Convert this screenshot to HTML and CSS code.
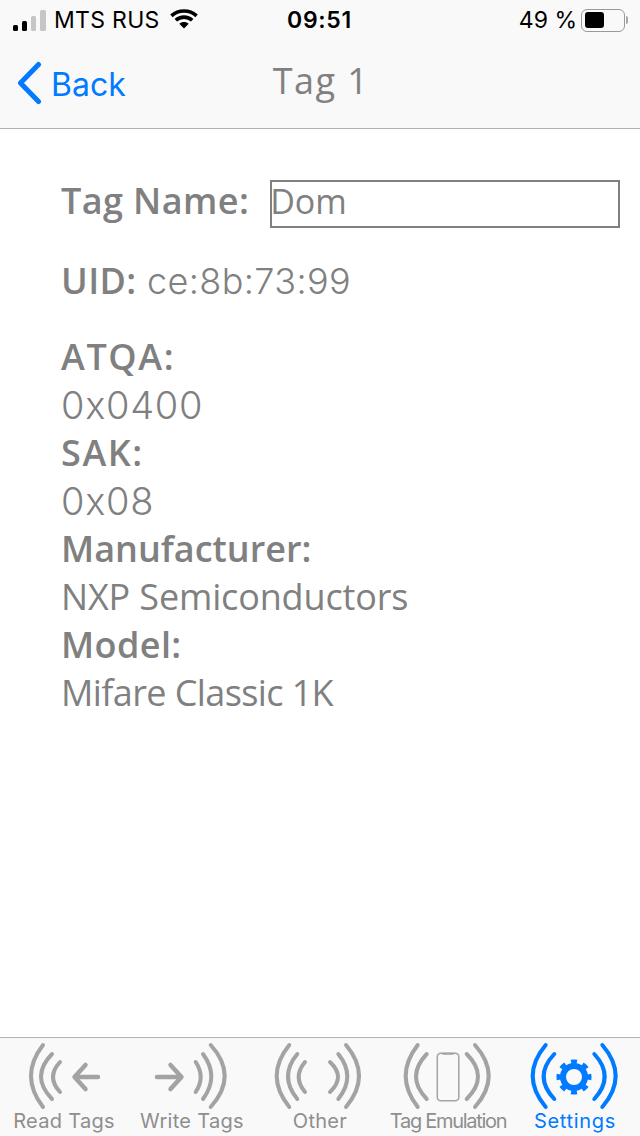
FILE: index.html
```html
<!DOCTYPE html>
<html lang="en">
<head>
<meta charset="utf-8">
<title>Tag 1</title>
<link rel="stylesheet" href="styles.css">
</head>
<body>
<div class="app">
  <header class="top">
    <div class="status">
      <div class="status-left">
        <div class="bars"><i class="bar b1"></i><i class="bar b2"></i><i class="bar b3"></i><i class="bar b4"></i></div>
        <span class="carrier">MTS RUS</span>
        <svg class="wifi" viewBox="0 0 30 20" width="30" height="20"><path d="M15 19.500 10.300 14.800C13 12.300 17 12.300 19.700 14.800Z" fill="#000"/><path d="M6.800 11.300C11.400 7 18.600 7 23.200 11.300" class="wifi-arc"/><path d="M2.400 6.900C9.400 .3 20.600 .3 27.600 6.900" class="wifi-arc"/></svg>
      </div>
      <span class="time">09:51</span>
      <div class="status-right">
        <span class="percent">49 %</span>
        <div class="battery"><div class="battery-fill"></div></div>
        <div class="battery-nub"></div>
      </div>
    </div>
    <nav class="nav">
      <div class="back">
        <svg class="chevron" viewBox="0 0 26 44" width="26" height="44"><path d="M22.500 3.500 4.500 22 22.500 40.500" fill="none" stroke="#007aff" stroke-width="5" stroke-linecap="round" stroke-linejoin="round"/></svg>
        <span class="back-label">Back</span>
      </div>
      <h1 class="title">Tag 1</h1>
    </nav>
  </header>

  <main class="content">
    <div class="name-row">
      <label class="key wide" for="tagname">Tag Name:</label>
      <input class="name-input" id="tagname" value="Dom">
    </div>
    <p class="uid"><b class="key wide">UID:</b> <span class="num uid-value">ce:8b:73:99</span></p>
    <dl class="details">
      <dt class="key caps">ATQA:</dt><dd class="num">0x0400</dd>
      <dt class="key caps">SAK:</dt><dd class="num">0x08</dd>
      <dt class="key">Manufacturer:</dt><dd class="maker">NXP Semiconductors</dd>
      <dt class="key wide">Model:</dt><dd class="model">Mifare Classic 1K</dd>
    </dl>
  </main>

  <footer class="tabs">
    <div class="tab">
      <svg class="tab-icon" viewBox="0 0 128 70"><path d="M43 4Q19 35 43 66M52 13Q30 35.500 52 58M60 21Q46 36 60 51"/><path d="M98 36H76M85.500 24 74.500 36 85.500 48" class="arrow"/></svg>
      <span class="tab-label">Read Tags</span>
    </div>
    <div class="tab">
      <svg class="tab-icon" viewBox="0 0 128 70"><path d="M82.700 4Q110.700 35 82.700 66M75 13Q91.600 35.500 75 58M67.700 21Q77.700 36 67.700 51"/><path d="M29 36H52M42.500 24 53.500 36 42.500 48" class="arrow"/></svg>
      <span class="tab-label">Write Tags</span>
    </div>
    <div class="tab">
      <svg class="tab-icon" viewBox="0 0 128 70"><path d="M33.300 4Q8.100 35 33.300 66M41.300 13Q22.700 35.500 41.300 58M49 21Q36.400 36 49 51M90 4Q116 35 90 66M82.300 13Q100.300 35.500 82.300 58M74 21Q90 36 74 51"/></svg>
      <span class="tab-label">Other</span>
    </div>
    <div class="tab">
      <svg class="tab-icon" viewBox="0 0 128 70"><path d="M33.700 4Q9.700 35 33.700 66M42.700 13Q21.300 35.500 42.700 58M91 4Q118.400 35 91 66M82.700 13Q105.300 35.500 82.700 58"/><rect class="phone" x="53.300" y="12.300" width="21.500" height="47.500" rx="3.500"/><path class="notch" d="M59 12.800H69"/></svg>
      <span class="tab-label tight">Tag Emulation</span>
    </div>
    <div class="tab active">
      <svg class="tab-icon" viewBox="0 0 128 70"><path d="M33.700 4Q7.700 35 33.700 66M42.300 13Q21 35.500 42.300 58M90.300 4Q117 35 90.300 66M82.300 13Q103 35.500 82.300 58"/><circle class="gear-ring" cx="62" cy="36" r="11"/><circle class="gear-teeth" cx="62" cy="36" r="15" pathLength="48" stroke-dasharray="3 3" stroke-dashoffset="1.500"/></svg>
      <span class="tab-label">Settings</span>
    </div>
  </footer>
</div>
</body>
</html>
```
FILE: styles.css
```css
* { box-sizing: border-box; }
html, body { margin: 0; padding: 0; background: #fff; }
.app {
  width: 640px;
  height: 1136px;
  display: flex;
  flex-direction: column;
  overflow: hidden;
  font-family: "Open Sans", sans-serif;
  color: #808080;
}

/* header */
.top { background: #f9f9f9; border-bottom: 1px solid #b2b2b2; height: 129px; }
.status {
  height: 40px;
  padding: 0 12px 0 13px;
  display: grid;
  grid-template-columns: 1fr auto 1fr;
  align-items: center;
  color: #000;
  font-family: Inter, "Liberation Sans", sans-serif;
  font-size: 23px;
}
.status-left { display: flex; align-items: center; }
.bars { display: flex; align-items: flex-end; gap: 4px; height: 21px; }
.bar { display: block; width: 5px; border-radius: 1.500px; background: #000; }
.b1 { height: 6px; }
.b2 { height: 10px; }
.b3 { height: 15px; background: #c6c6c6; }
.b4 { height: 21px; background: #c6c6c6; width: 6px; }
.carrier { margin-left: 8px; letter-spacing: 0.300px; }
.wifi { margin-left: 9px; margin-bottom: 2px; }
.wifi-arc { fill: none; stroke: #000; stroke-width: 3.600; }
.time { font-weight: 600; letter-spacing: 0.700px; margin-left: -2px; }
.status-right { display: flex; align-items: center; justify-content: flex-end; }
.percent { margin-right: 4px; }
.battery {
  width: 44px;
  height: 23px;
  border: 1.500px solid #9a9a9a;
  border-radius: 6px;
  padding: 2.500px;
}
.battery-fill { width: 19px; height: 100%; background: #000; border-radius: 3px; }
.battery-nub { width: 2px; height: 8px; margin-left: 1px; background: #a8a8a8; border-radius: 0 2px 2px 0; }

.nav { height: 88px; display: grid; grid-template-columns: 1fr auto 1fr; align-items: center; }
.back { display: flex; align-items: center; padding-left: 16px; grid-column: 1; grid-row: 1; }
.chevron { margin-bottom: 2px; }
.back-label {
  margin-left: 9px;
  color: #007aff;
  font-family: Inter, "Liberation Sans", sans-serif;
  font-size: 32px;
}
.title { margin: 0 0 8px 2px; font-size: 36px; font-weight: 400; letter-spacing: 1.400px; color: #808080; grid-column: 2; }

/* content */
.content { flex: 1; padding: 48px 20px 0 61px; font-size: 36px; line-height: 48px; }
.key { font-weight: 600; }
.key.wide { letter-spacing: 0.400px; }
.key.caps { letter-spacing: 1.600px; }
.name-row { display: flex; align-items: center; gap: 21px; height: 48px; }
.name-input {
  flex: 1;
  min-width: 0;
  height: 48px;
  margin-top: 6px;
  padding: 0 0 6px;
  border: 2px solid #808080;
  border-radius: 0;
  background: #fff;
  color: #808080;
  font: inherit;
  font-size: 34px;
  line-height: 38px;
  text-indent: -2px;
  outline: none;
}
.uid { margin: 32px 0 0; }
.details { margin: 28px 0 0; }
.details dd { margin: 0; }
.num { font-family: Inter, "Open Sans", sans-serif; font-size: 38px; font-weight: 300; letter-spacing: 0.700px; }
.uid-value { font-size: 36px; letter-spacing: 0.400px; margin-left: 1px; }
.maker { letter-spacing: -0.150px; }
.model { letter-spacing: -0.600px; }

/* tab bar */
.tabs {
  height: 99px;
  background: #f9f9f9;
  border-top: 1px solid #b2b2b2;
  display: grid;
  grid-template-columns: repeat(5, 128px);
}
.tab { display: flex; flex-direction: column; align-items: center; color: #8e8e8e; }
.tab-icon {
  display: block;
  width: 128px;
  height: 70px;
  margin-top: 3px;
  fill: none;
  stroke: #a3a3a3;
  stroke-width: 4;
  stroke-linecap: round;
  stroke-linejoin: round;
}
.tab-icon .arrow { stroke-width: 4.500; }
.tab-icon .phone { stroke-width: 1.500; }
.tab-icon .notch { stroke-width: 2; }
.tab-label {
  margin-top: -2px;
  font-family: Inter, "Liberation Sans", sans-serif;
  font-size: 20px;
  line-height: 24px;
  letter-spacing: 0.300px;
  white-space: nowrap;
}
.tab-label.tight { letter-spacing: -1.300px; }
.active { color: #007aff; }
.active .tab-icon { stroke: #007aff; }
.active .tab-label { letter-spacing: 0.700px; margin-left: -2px; }
.gear-ring { stroke-width: 6; }
.gear-teeth { stroke-width: 5; stroke-linecap: butt; }
```
